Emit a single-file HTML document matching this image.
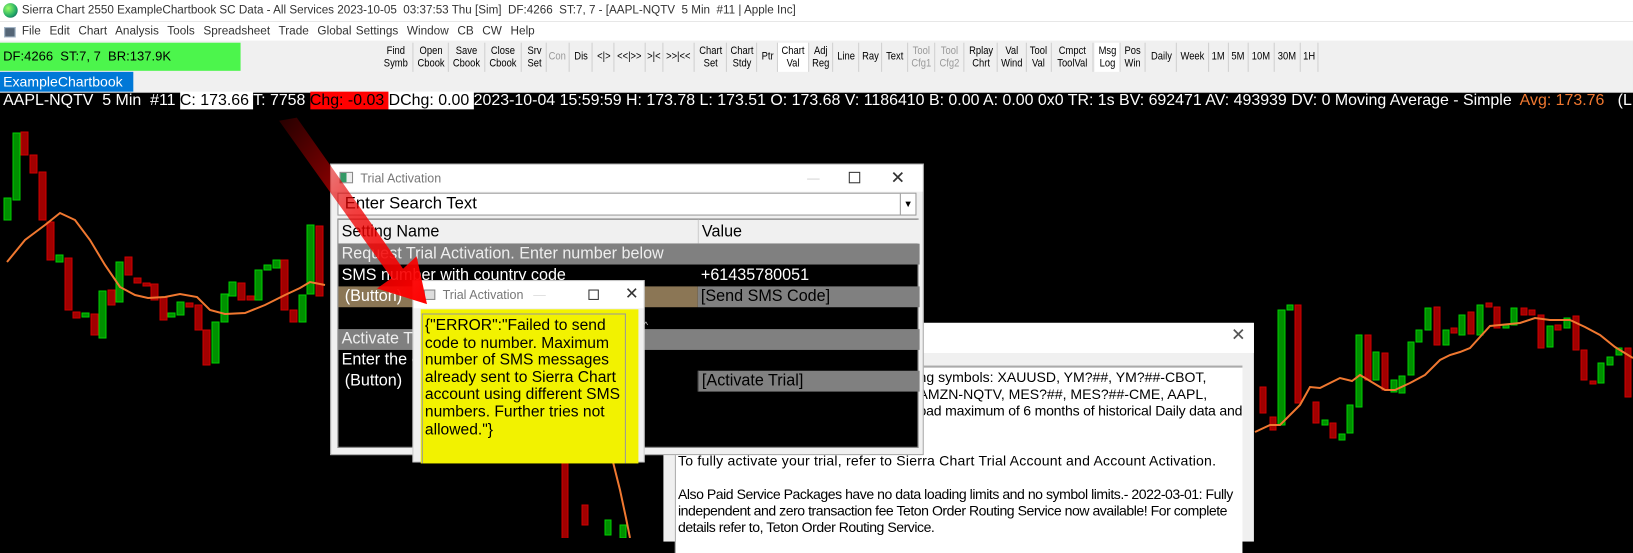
<!DOCTYPE html>
<html><head><meta charset="utf-8"><style>
*{margin:0;padding:0;box-sizing:border-box}
body{width:1633px;height:538px;overflow:hidden;background:#000;font-family:"Liberation Sans",sans-serif;position:relative}
.abs{position:absolute}
#root{position:absolute;left:0;top:0;width:1568px;height:517px;transform:scale(1.04145);transform-origin:0 0}
#title{left:0;top:0;width:1568px;height:21px;background:#fff;font-size:11.2px;color:#333;line-height:21px;padding-left:21px;white-space:nowrap}
#menu{left:0;top:21px;width:1568px;height:19px;background:#fff;font-size:11.3px;color:#333;line-height:19px;padding-left:21px;word-spacing:1px;white-space:nowrap}
#tb{left:0;top:39px;width:1568px;height:50px;background:#f0f0f0}
#green{left:0;top:41px;width:231px;height:27px;background:#4cf54c;font-size:12.5px;line-height:27px;padding-left:3px;color:#000}
.btn{position:absolute;top:41px;height:28px;font-size:11px;line-height:12px;text-align:center;color:#000;border-right:1px solid #d0d0d0;padding-top:2px;white-space:nowrap}
.btn span{display:inline-block;transform:scaleX(.82)}
.one{line-height:24px;padding-top:1px}
.dis{color:#999}
.pr{background:#fff}
#tab{left:0;top:69px;width:128px;height:19px;background:#0078d7;color:#fff;font-size:13.5px;line-height:19px;padding-left:3px}
#info{left:0;top:88px;height:19px;font-size:15.3px;color:#fff;line-height:18px;white-space:nowrap;padding-left:3px}
.wb{background:#fff;color:#000}.rb{background:#f00;color:#000}
.dlg{position:absolute;background:#f0f0f0;border:1px solid #aaa}
.dt{position:absolute;left:0;top:0;right:0;background:#fff;font-size:12px;color:#777}
.row{position:absolute;left:0;height:20px;font-size:15.5px;line-height:20px;color:#fff;white-space:nowrap;padding-left:3px}
</style></head><body>

<svg class="abs" style="left:0;top:0" width="1633" height="538">
<g stroke-width="1">
<g fill="#009000" stroke="#00d000">
<rect x="4" y="198" width="7" height="22"/><rect x="13" y="133" width="7" height="67"/><rect x="56" y="255" width="7" height="7"/><rect x="82" y="313" width="7" height="4"/><rect x="99" y="291" width="7" height="47"/><rect x="116" y="262" width="7" height="40"/><rect x="168" y="313" width="7" height="4"/><rect x="177" y="302" width="7" height="13"/><rect x="212" y="322" width="7" height="41"/><rect x="221" y="294" width="7" height="28"/><rect x="229" y="282" width="7" height="14"/><rect x="255" y="270" width="7" height="30"/><rect x="264" y="265" width="7" height="5"/><rect x="273" y="260" width="7" height="8"/><rect x="299" y="295" width="7" height="27"/><rect x="307" y="225" width="7" height="69"/>
<rect x="1278" y="310" width="7" height="115"/><rect x="1287" y="305" width="6" height="5"/><rect x="1322" y="420" width="6" height="5"/><rect x="1339" y="434" width="6" height="6"/><rect x="1347" y="405" width="6" height="28"/><rect x="1356" y="335" width="6" height="72"/><rect x="1373" y="352" width="6" height="28"/><rect x="1391" y="380" width="6" height="12"/><rect x="1399" y="376" width="6" height="17"/><rect x="1408" y="342" width="6" height="33"/><rect x="1416" y="330" width="6" height="12"/><rect x="1425" y="308" width="6" height="22"/><rect x="1443" y="330" width="6" height="15"/><rect x="1459" y="315" width="6" height="20"/><rect x="1477" y="305" width="6" height="30"/><rect x="1503" y="325" width="6" height="3"/><rect x="1511" y="308" width="6" height="17"/><rect x="1547" y="326" width="6" height="21"/><rect x="1564" y="318" width="6" height="10"/><rect x="1598" y="363" width="6" height="20"/><rect x="1607" y="357" width="6" height="8"/><rect x="1616" y="348" width="6" height="7"/>
<rect x="605" y="520" width="6" height="15"/><rect x="620" y="525" width="6" height="13"/>
</g>
<g fill="#a00000" stroke="#d00000">
<rect x="21" y="132" width="7" height="23"/><rect x="30" y="155" width="7" height="18"/><rect x="39" y="172" width="7" height="48"/><rect x="47" y="222" width="7" height="38"/><rect x="65" y="258" width="7" height="52"/><rect x="73" y="312" width="7" height="6"/><rect x="91" y="314" width="7" height="21"/><rect x="108" y="290" width="7" height="15"/><rect x="125" y="257" width="7" height="18"/><rect x="134" y="278" width="7" height="5"/><rect x="143" y="283" width="7" height="3"/><rect x="151" y="284" width="7" height="16"/><rect x="160" y="297" width="7" height="23"/><rect x="186" y="303" width="7" height="4"/><rect x="195" y="305" width="7" height="25"/><rect x="203" y="330" width="7" height="35"/><rect x="238" y="283" width="7" height="17"/><rect x="247" y="296" width="7" height="4"/><rect x="281" y="260" width="7" height="50"/><rect x="290" y="310" width="7" height="12"/><rect x="316" y="226" width="7" height="70"/>
<rect x="1260" y="387" width="6" height="26"/><rect x="1270" y="417" width="6" height="13"/><rect x="1295" y="305" width="6" height="98"/><rect x="1313" y="402" width="6" height="21"/><rect x="1330" y="423" width="6" height="15"/><rect x="1365" y="335" width="6" height="45"/><rect x="1382" y="353" width="6" height="37"/><rect x="1434" y="307" width="6" height="38"/><rect x="1451" y="328" width="6" height="5"/><rect x="1468" y="312" width="6" height="22"/><rect x="1486" y="303" width="6" height="4"/><rect x="1494" y="307" width="6" height="21"/><rect x="1521" y="308" width="6" height="7"/><rect x="1529" y="310" width="6" height="5"/><rect x="1538" y="315" width="6" height="33"/><rect x="1555" y="325" width="6" height="5"/><rect x="1573" y="316" width="6" height="34"/><rect x="1581" y="350" width="6" height="30"/><rect x="1590" y="381" width="6" height="3"/><rect x="1625" y="348" width="6" height="49"/>
<rect x="562" y="460" width="6" height="80"/><rect x="582" y="505" width="6" height="20"/>
</g>
</g>
<polyline fill="none" stroke="#f07830" stroke-width="2" points="7,262 25,240 45,225 60,213 75,220 90,240 105,265 120,287 135,295 148,298 165,297 180,294 197,297 210,310 225,314 245,313 265,305 285,295 300,288 310,282 325,285"/>
<polyline fill="none" stroke="#f07830" stroke-width="2" points="1255,432 1270,425 1280,425 1300,405 1310,387 1320,388 1340,378 1352,381 1360,375 1375,384 1385,390 1395,390 1410,383 1425,375 1440,360 1450,355 1460,352 1470,348 1480,337 1490,326 1500,325 1520,323 1535,318 1550,320 1570,320 1585,327 1600,335 1615,347 1633,358"/>
<polyline fill="none" stroke="#f07830" stroke-width="2" points="612,458 620,490 626,518 630,538"/>
</svg>

<div id="root">
<div id="title" class="abs"><span style="position:absolute;left:3px;top:3px;width:14px;height:14px;border-radius:50%;background:radial-gradient(circle at 35% 35%,#9f6,#2a6 60%,#135)"></span>Sierra Chart 2550 ExampleChartbook SC Data - All Services 2023-10-05&nbsp; 03:37:53 Thu [Sim]&nbsp; DF:4266&nbsp; ST:7, 7 - [AAPL-NQTV&nbsp; 5 Min&nbsp; #11 | Apple Inc]</div>
<div id="menu" class="abs"><span style="position:absolute;left:4px;top:5px;width:11px;height:10px;background:#567;border:1px solid #abc"></span>File&nbsp; Edit&nbsp; Chart&nbsp; Analysis&nbsp; Tools&nbsp; Spreadsheet&nbsp; Trade&nbsp; Global Settings&nbsp; Window&nbsp; CB&nbsp; CW&nbsp; Help</div>
<div id="tb" class="abs"></div>
<div id="green" class="abs">DF:4266&nbsp; ST:7, 7&nbsp; BR:137.9K</div>
<div class="btn" style="left:365px;width:32px"><span>Find<br>Symb</span></div>
<div class="btn" style="left:397px;width:34px"><span>Open<br>Cbook</span></div>
<div class="btn" style="left:431px;width:35px"><span>Save<br>Cbook</span></div>
<div class="btn" style="left:466px;width:35px"><span>Close<br>Cbook</span></div>
<div class="btn" style="left:503px;width:22px"><span>Srv<br>Set</span></div>
<div class="btn one dis" style="left:525px;width:22px"><span>Con</span></div>
<div class="btn one" style="left:547px;width:22px"><span>Dis</span></div>
<div class="btn one" style="left:571px;width:19px"><span>&lt;|&gt;</span></div>
<div class="btn one" style="left:590px;width:30px"><span>&lt;&lt;|&gt;&gt;</span></div>
<div class="btn one" style="left:620px;width:17px"><span>&gt;|&lt;</span></div>
<div class="btn one" style="left:637px;width:30px"><span>&gt;&gt;|&lt;&lt;</span></div>
<div class="btn" style="left:667px;width:31px"><span>Chart<br>Set</span></div>
<div class="btn" style="left:698px;width:29px"><span>Chart<br>Stdy</span></div>
<div class="btn one" style="left:729px;width:18px"><span>Ptr</span></div>
<div class="btn pr" style="left:747px;width:30px"><span>Chart<br>Val</span></div>
<div class="btn" style="left:777px;width:23px"><span>Adj<br>Reg</span></div>
<div class="btn one" style="left:800px;width:25px"><span>Line</span></div>
<div class="btn one" style="left:825px;width:22px"><span>Ray</span></div>
<div class="btn one" style="left:847px;width:25px"><span>Text</span></div>
<div class="btn dis" style="left:872px;width:26px"><span>Tool<br>Cfg1</span></div>
<div class="btn dis" style="left:898px;width:28px"><span>Tool<br>Cfg2</span></div>
<div class="btn" style="left:928px;width:30px"><span>Rplay<br>Chrt</span></div>
<div class="btn" style="left:958px;width:28px"><span>Val<br>Wind</span></div>
<div class="btn" style="left:986px;width:24px"><span>Tool<br>Val</span></div>
<div class="btn" style="left:1010px;width:40px"><span>Cmpct<br>ToolVal</span></div>
<div class="btn pr" style="left:1051px;width:25px"><span>Msg<br>Log</span></div>
<div class="btn" style="left:1076px;width:24px"><span>Pos<br>Win</span></div>
<div class="btn one" style="left:1102px;width:28px"><span>Daily</span></div>
<div class="btn one" style="left:1130px;width:31px"><span>Week</span></div>
<div class="btn one" style="left:1161px;width:19px"><span>1M</span></div>
<div class="btn one" style="left:1180px;width:19px"><span>5M</span></div>
<div class="btn one" style="left:1199px;width:25px"><span>10M</span></div>
<div class="btn one" style="left:1224px;width:25px"><span>30M</span></div>
<div class="btn one" style="left:1249px;width:17px"><span>1H</span></div>
<div id="tab" class="abs">ExampleChartbook</div>
<div id="info" class="abs">AAPL-NQTV&nbsp; 5 Min&nbsp; #11 <span class="wb">C: 173.66 </span> T: 7758 <span class="rb">Chg: -0.03 </span> <span class="wb">DChg: 0.00 </span> 2023-10-04 15:59:59 H: 173.78 L: 173.51 O: 173.68 V: 1186410 B: 0.00 A: 0.00 0x0 TR: 1s BV: 692471 AV: 493939 DV: 0 Moving Average - Simple&nbsp; <span style="color:#f07830">Avg: 173.76</span>&nbsp;&nbsp; (L</div>

<!-- dialog 3 (behind) -->
<div class="dlg" style="left:637px;top:310px;width:567px;height:210px;border:none">
 <div class="dt" style="height:29px"><span style="position:absolute;left:545px;top:2px;font-size:17px;color:#555">✕</span></div>
 <div class="abs" style="left:11px;top:41px;width:545px;height:180px;background:#fff;border-top:2px solid #aaa;border-left:1px solid #aaa;font-size:13.5px;line-height:16px;color:#000;padding:2px 0 0 2px;overflow:hidden">
  <div style="padding-left:231px;height:16px;white-space:nowrap">ng symbols: XAUUSD, YM?##, YM?##-CBOT,</div>
  <div style="padding-left:231px;height:16px;white-space:nowrap">AMZN-NQTV, MES?##, MES?##-CME, AAPL,</div>
  <div style="padding-left:231px;height:16px;white-space:nowrap;letter-spacing:-0.2px">oad maximum of 6 months of historical Daily data and</div>
  <div style="height:32px"></div>
  <div style="white-space:nowrap;letter-spacing:0.2px">To fully activate your trial, refer to Sierra Chart Trial Account and Account Activation.</div>
  <div style="height:16px"></div>
  <div style="white-space:nowrap;letter-spacing:-0.45px">Also Paid Service Packages have no data loading limits and no symbol limits.- 2022-03-01: Fully<br>independent and zero transaction fee Teton Order Routing Service now available! For complete<br>details refer to, Teton Order Routing Service.</div>
 </div>
</div>

<!-- dialog 1 -->
<div class="dlg" style="left:317px;top:157px;width:570px;height:280px">
 <div class="dt" style="height:26px;line-height:26px;padding-left:28px">Trial Activation
  <span style="position:absolute;left:8px;top:7px;width:13px;height:11px;border:1px solid #888;background:linear-gradient(90deg,#396 50%,#eee 50%)"></span>
  <span style="position:absolute;left:457px;top:0;color:#ccc">—</span>
  <span style="position:absolute;left:497px;top:7px;width:11px;height:11px;border:1px solid #333"></span>
  <span style="position:absolute;left:537px;top:0;font-size:17px;color:#333">✕</span>
 </div>
 <div class="abs" style="left:6px;top:27px;width:556px;height:22px;background:#fff;border:1px solid #999;font-size:16px;line-height:20px;padding-left:6px;color:#000">Enter Search Text<span style="position:absolute;right:0;top:0;width:15px;height:20px;border-left:1px solid #999;font-size:9px;text-align:center">▼</span></div>
 <div class="abs" style="left:6px;top:52px;width:558px;height:220px;background:#000;border:1px solid #999">
  <div class="row" style="top:0;width:558px;background:#f0f0f0;color:#000;height:23px;line-height:23px">Setting Name<span style="position:absolute;left:345px;top:0;height:23px;border-left:1px solid #ccc;padding-left:3px">Value</span></div>
  <div class="row" style="top:23px;width:558px;background:#808080;color:#eee">Request Trial Activation. Enter number below</div>
  <div class="row" style="top:44px;width:558px">SMS number with country code<span style="position:absolute;left:345px;top:0;padding-left:3px">+61435780051</span></div>
  <div class="row" style="top:64px;width:345px;background:#8b7655;padding-left:6px">(Button)</div>
  <div class="row" style="top:64px;left:345px;width:213px;background:#808080;color:#000">[Send SMS Code]</div>
  <div class="row" style="top:105px;width:558px;background:#808080;color:#eee">Activate Trial</div>
  <div class="row" style="top:125px;width:558px">Enter the code</div>
  <div class="row" style="top:145px;width:345px;padding-left:6px">(Button)</div>
  <div class="row" style="top:145px;left:345px;width:213px;background:#808080;color:#000;border-left:1px solid #555">[Activate Trial]</div>
 </div>
</div>

<!-- dialog 2 -->
<div class="dlg" style="left:396px;top:269px;width:223px;height:175px;border-color:#ccc">
 <div class="dt" style="height:26px;line-height:26px;padding-left:28px;font-size:12px">Trial Activation
  <span style="position:absolute;left:10px;top:8px;width:11px;height:10px;border:1px solid #888;background:#ddd"></span>
  <span style="position:absolute;left:115px;top:0;color:#ddd">—</span>
  <span style="position:absolute;left:168px;top:8px;width:10px;height:10px;border:1px solid #333"></span>
  <span style="position:absolute;left:203px;top:0;font-size:16px;color:#333">✕</span>
 </div>
 <div class="abs" style="left:7px;top:27px;width:209px;height:148px;background:#f2f200"></div>
 <div class="abs" style="left:8px;top:31px;width:196px;height:144px;border:1px solid #999;border-bottom:none;font-size:15px;line-height:16.6px;color:#000;padding:3px 2px 0 2px">{"ERROR":"Failed to send code to number. Maximum number of SMS messages already sent to Sierra Chart account using different SMS numbers. Further tries not allowed."}</div>
 <div class="abs" style="left:221px;top:37px;font-size:9px;color:#ccc">^</div>
</div>

<!-- red arrow -->
<svg class="abs" style="left:0;top:0" width="1568" height="517">
<defs><linearGradient id="ag" x1="0" y1="0" x2="1" y2="1"><stop offset="0" stop-color="#b00" stop-opacity="0.2"/><stop offset="0.5" stop-color="#e00" stop-opacity="0.75"/><stop offset="1" stop-color="#f00" stop-opacity="1"/></linearGradient></defs>
<polygon points="268,116 285,113 387,258 400,246 410,292 362,277 376,267" fill="url(#ag)"/>
</svg>
</div>
</body></html>
